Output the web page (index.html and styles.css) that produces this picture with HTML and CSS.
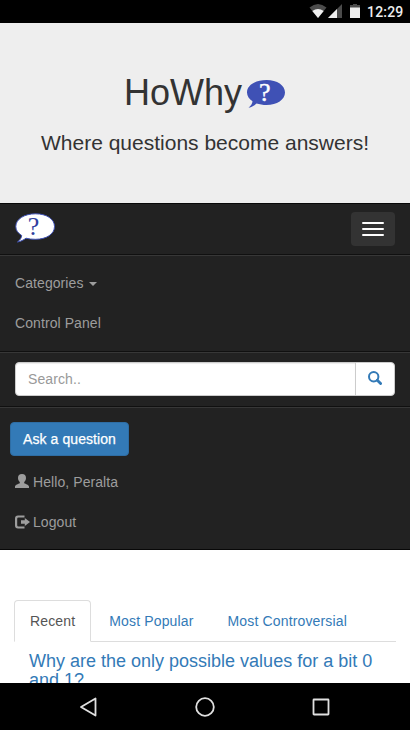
FILE: index.html
```html
<!DOCTYPE html>
<html lang="en">
<head>
<meta charset="utf-8">
<title>HoWhy</title>
<link rel="stylesheet" href="styles.css">
</head>
<body>
<div class="screen">
  <div class="status">
    <svg class="status-icons" width="54" height="22" viewBox="0 0 54 22">
      <path d="M0.500 7.500Q9 .5 17.500 7.500L9 18Z" fill="#4b4b4b"/>
      <path d="M3.300 11Q9 6.800 14.700 11L9 18Z" fill="#eee"/>
      <path d="M19 18L33 4V18Z" fill="#4b4b4b"/>
      <path d="M19 18L28 9V18Z" fill="#eee"/>
      <path d="M44 4H48V5H51V8H41V5H44Z" fill="#4b4b4b"/>
      <path d="M41 7.500H51V18H41Z" fill="#eee"/>
    </svg>
    <span class="clock">12:29</span>
  </div>
  <header class="hero">
    <h1 class="hero-title">HoWhy
      <svg class="hero-logo" width="40" height="32" viewBox="0 0 40 32">
        <path d="M20.500 2C31.200 2 39 7.300 39 14.500S31 27 20.500 27C17 27 13.500 26.400 10.500 25.500C8.500 27.200 6 29 2.500 29.800C4.800 28 6.400 25.700 6.500 23.300C3.300 21 1 18.200 1 14.500C1 7.300 9.300 2 20.500 2Z" fill="#3f51b5"/>
        <text class="mark" x="18.800" y="22.500" fill="#fff" stroke="#fff" stroke-width=".4">?</text>
      </svg>
    </h1>
    <p class="hero-text">Where questions become answers!</p>
  </header>
  <nav class="navbar">
    <div class="nav-head">
      <svg width="42" height="34" viewBox="0 0 42 34">
        <path d="M20.500 1.800C31.500 1.800 39.500 7 39.500 14.500S31.500 27.300 20.500 27.300C17 27.300 14 27 11 26.200C8.500 28 6 29.300 2.500 30C5 28 6.500 26 6.700 23.500C3 21 .8 18.500 .8 14.500C.8 7 9.500 1.800 20.500 1.800Z" fill="#fff" stroke="#3f51b5"/>
        <text class="mark" x="18.500" y="23" fill="#303f9f">?</text>
      </svg>
      <button class="toggle"><i></i><i></i><i></i></button>
    </div>
    <ul class="menu section">
      <li>Categories <span class="caret"></span></li>
      <li>Control Panel</li>
    </ul>
    <form class="search section">
      <input class="search-input" type="text" placeholder="Search..">
      <button class="search-button" type="button">
        <svg width="14" height="14" viewBox="0 0 14 14" fill="none" stroke="#337ab7"><circle cx="5.700" cy="5.700" r="4.700" stroke-width="2"/><path d="M9.300 9.300L12.600 12.600" stroke-width="2.800" stroke-linecap="round"/></svg>
      </button>
    </form>
    <div class="account section">
      <button class="ask">Ask a question</button>
      <ul class="menu">
        <li><svg class="icon" width="14" height="14" viewBox="0 0 14 14"><path d="M7 0C9.700 0 11 1.500 11 3.900C11 5.600 10.300 7.100 9.200 8V9.200C10.700 10 14 10.700 14 12.500V14H0V12.500C0 10.700 3.300 10 4.800 9.200V8C3.700 7.100 3 5.600 3 3.900C3 1.500 4.300 0 7 0Z" fill="#9d9d9d"/></svg> Hello, Peralta</li>
        <li><svg class="icon logout" width="15" height="14" viewBox="0 0 15 14"><path d="M9.500 .5H3A3 3 0 0 0 0 3.500V10.500A3 3 0 0 0 3 13.500H9.500V11.500H3.500Q2.200 11.500 2.200 10.200V3.800Q2.200 2.500 3.500 2.500H9.500ZM9.800 3L15 7L9.800 11V8.800H6V5.200H9.800Z" fill="#9d9d9d"/></svg> Logout</li>
      </ul>
    </div>
  </nav>
  <main class="content">
    <div class="tabs">
      <a class="tab active">Recent</a><a class="tab">Most Popular</a><a class="tab">Most Controversial</a>
    </div>
    <h4 class="question">Why are the only possible values for a bit 0 and 1?</h4>
  </main>
  <footer class="softkeys">
    <svg width="20" height="22" viewBox="0 0 20 22"><path d="M2 11L16.500 2.500V19.500Z"/></svg>
    <svg width="22" height="22" viewBox="0 0 22 22"><circle cx="11" cy="11" r="8.800"/></svg>
    <svg width="20" height="22" viewBox="0 0 20 22"><rect x="2.500" y="3.500" width="15" height="15" rx=".5"/></svg>
  </footer>
</div>
</body>
</html>
```
FILE: styles.css
```css
* { box-sizing: border-box; }
body {
  margin: 0;
  font: 14px/20px "Liberation Sans", Arial, sans-serif;
  color: #333;
  background: #fff;
}
h1, h4, p, ul { margin: 0; padding: 0; font-weight: 400; }
ul { list-style: none; }
button { font: inherit; padding: 0; }
svg { display: block; }

.screen {
  height: 730px;
  display: flex;
  flex-direction: column;
  overflow: hidden;
}
.status {
  height: 23px;
  flex: none;
  display: flex;
  justify-content: flex-end;
  padding-right: 6px;
  background: #000;
}
.clock {
  width: 37px;
  margin-left: 4px;
  font: 500 14px/24px Roboto, sans-serif;
  letter-spacing: .2px;
  color: #eee;
}

.hero {
  height: 180px;
  flex: none;
  padding-top: 50px;
  text-align: center;
  background: #eee;
}
.hero-title {
  display: flex;
  justify-content: center;
  gap: 4px;
  height: 40px;
  font-size: 36px;
  line-height: 40px;
}
.hero-logo { margin-top: 5px; }
.hero-text { margin-top: 15px; font-size: 21px; line-height: 30px; }
.mark {
  font: 26px "Liberation Serif", serif;
  text-anchor: middle;
}

.navbar {
  height: 347px;
  flex: none;
  color: #9d9d9d;
  background: #222;
  border: solid #080808;
  border-width: 1px 0;
}
.nav-head {
  height: 50px;
  display: flex;
  justify-content: space-between;
  padding: 8px 15px;
}
.toggle {
  width: 44px;
  height: 34px;
  display: flex;
  flex-direction: column;
  align-items: center;
  justify-content: center;
  gap: 4px;
  background: #333;
  border: 0;
  border-radius: 4px;
}
.toggle i { width: 22px; height: 2px; border-radius: 1px; background: #fff; }
.section { border-top: 1px solid #101010; box-shadow: inset 0 1px #373737; }
.menu li { height: 40px; padding: 10px 15px; letter-spacing: .08px; }
.menu.section { height: 97px; padding-top: 8px; }
.caret {
  display: inline-block;
  margin-left: 2px;
  vertical-align: middle;
  border: 4px solid transparent;
  border-top-color: #9d9d9d;
  border-bottom: 0;
}
.search { height: 55px; display: flex; padding: 10px 15px; }
.search-input {
  flex: 1;
  min-width: 0;
  height: 34px;
  padding: 6px 12px;
  font: inherit;
  letter-spacing: .1px;
  border: 1px solid #ccc;
  border-radius: 4px 0 0 4px;
  box-shadow: inset 0 1px 1px rgba(0, 0, 0, .075);
}
.search-input::placeholder { color: #999; opacity: 1; }
.search-button {
  width: 40px;
  height: 34px;
  margin-left: -1px;
  padding-bottom: 2px;
  display: flex;
  align-items: center;
  justify-content: center;
  background: #fff;
  border: 1px solid #ccc;
  border-radius: 0 4px 4px 0;
}
.account { padding-top: 15px; }
.ask {
  display: block;
  width: 119px;
  height: 34px;
  margin: 0 0 6px 10px;
  color: #fff;
  background: #337ab7;
  border: 1px solid #2e6da4;
  border-radius: 4px;
  letter-spacing: .08px;
  -webkit-text-stroke: .25px #fff;
}
.icon { display: inline-block; vertical-align: -1px; }
.logout { margin-right: -1px; vertical-align: -2px; }

.content { flex: 1; min-height: 0; overflow: hidden; padding: 50px 14px 0; }
.tabs { height: 42px; display: flex; gap: 2px; border-bottom: 1px solid #ddd; }
.tab {
  height: 42px;
  padding: 10px 15px;
  letter-spacing: .15px;
  color: #337ab7;
  border: 1px solid transparent;
  border-radius: 4px 4px 0 0;
}
.tab.active { color: #555; background: #fff; border-color: #ddd #ddd #fff; }
.question { margin: 10px 15px 0; font-size: 18px; line-height: 19px; color: #337ab7; }

.softkeys {
  height: 47px;
  flex: none;
  display: flex;
  justify-content: space-between;
  align-items: center;
  padding: 0 79px;
  background: #000;
}
.softkeys svg { fill: none; stroke: #e0e0e0; stroke-width: 1.8; stroke-linejoin: round; }
```
